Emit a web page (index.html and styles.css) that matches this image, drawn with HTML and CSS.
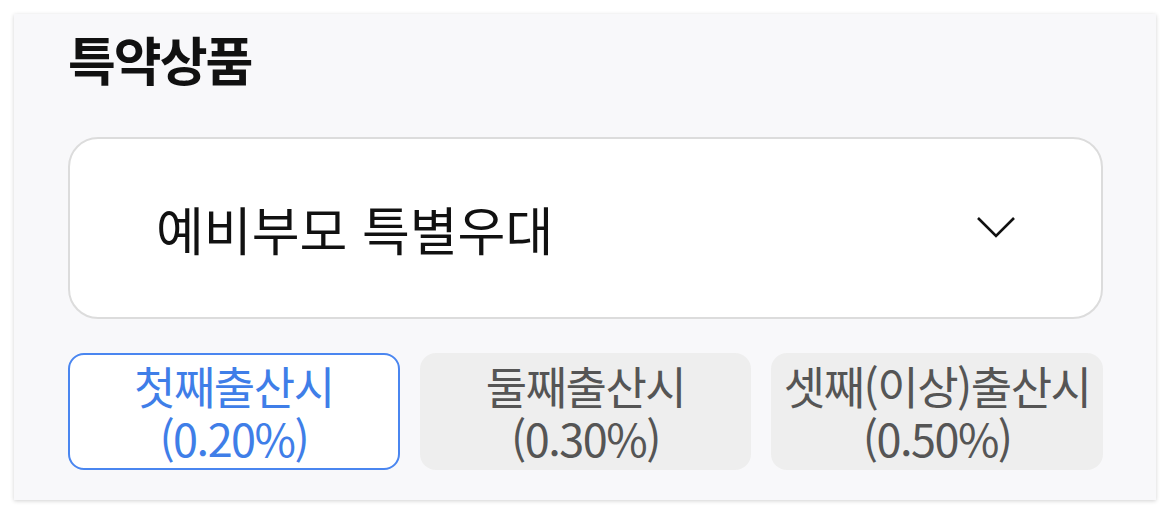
FILE: index.html
```html
<!DOCTYPE html>
<html lang="ko">
<head>
  <meta charset="UTF-8">
  <title>특약상품</title>
  <link rel="stylesheet" href="styles.css">
</head>
<body>
  <div class="card">
    <!-- Section Title -->
    <h2 class="title">특약상품</h2>

    <!-- Rider Select -->
    <div class="select">
      <span class="select-text">예비부모 특별우대</span>
      <svg class="chevron" width="40" height="24" viewBox="0 0 40 24">
        <polyline points="2,2 20,20 38,2" fill="none" stroke="#111" stroke-width="2.6"/>
      </svg>
    </div>

    <!-- Options -->
    <div class="options">
      <button class="option active">
        <span class="option-name">첫째출산시</span>
        <span class="option-rate">(0.20%)</span>
      </button>
      <button class="option">
        <span class="option-name">둘째출산시</span>
        <span class="option-rate">(0.30%)</span>
      </button>
      <button class="option">
        <span class="option-name">셋째(이상)출산시</span>
        <span class="option-rate">(0.50%)</span>
      </button>
    </div>
  </div>
</body>
</html>
```
FILE: styles.css
```css
body {
  margin: 0;
  background: #fff;
  font-family: "Noto Sans CJK KR", "Noto Sans", sans-serif;
  color: #111;
}

.card {
  margin: 14px;
  height: 486px;
  box-sizing: border-box;
  background: #f8f8fa;
  box-shadow: 0 1px 4px rgba(0, 0, 0, 0.18);
  padding: 14px 53px 0 54px;
}

.title {
  margin: 0;
  font-size: 52px;
  font-weight: 700;
  letter-spacing: -2px;
  line-height: 62px;
}

.select {
  margin-top: 47px;
  height: 182px;
  box-sizing: border-box;
  background: #fff;
  border: 2px solid #dcdcdc;
  border-radius: 30px;
  display: flex;
  align-items: center;
  justify-content: space-between;
  padding: 0 85px 0 86px;
}

.select-text {
  font-size: 52px;
  letter-spacing: 0;
}

.options {
  margin-top: 34px;
  display: grid;
  grid-template-columns: repeat(3, 1fr);
  gap: 20px;
}

.option {
  height: 117px;
  border: 2px solid transparent;
  border-radius: 16px;
  background: #eeeeee;
  color: #555;
  font-family: inherit;
  font-size: 45px;
  letter-spacing: -1.5px;
  padding: 0;
  display: flex;
  flex-direction: column;
  align-items: center;
  justify-content: center;
}

.option-name,
.option-rate {
  display: block;
  line-height: 52px;
  height: 52px;
  overflow: visible;
}

.option.active {
  background: #fff;
  border-color: #4a86f0;
  color: #3f7ee8;
}
```
